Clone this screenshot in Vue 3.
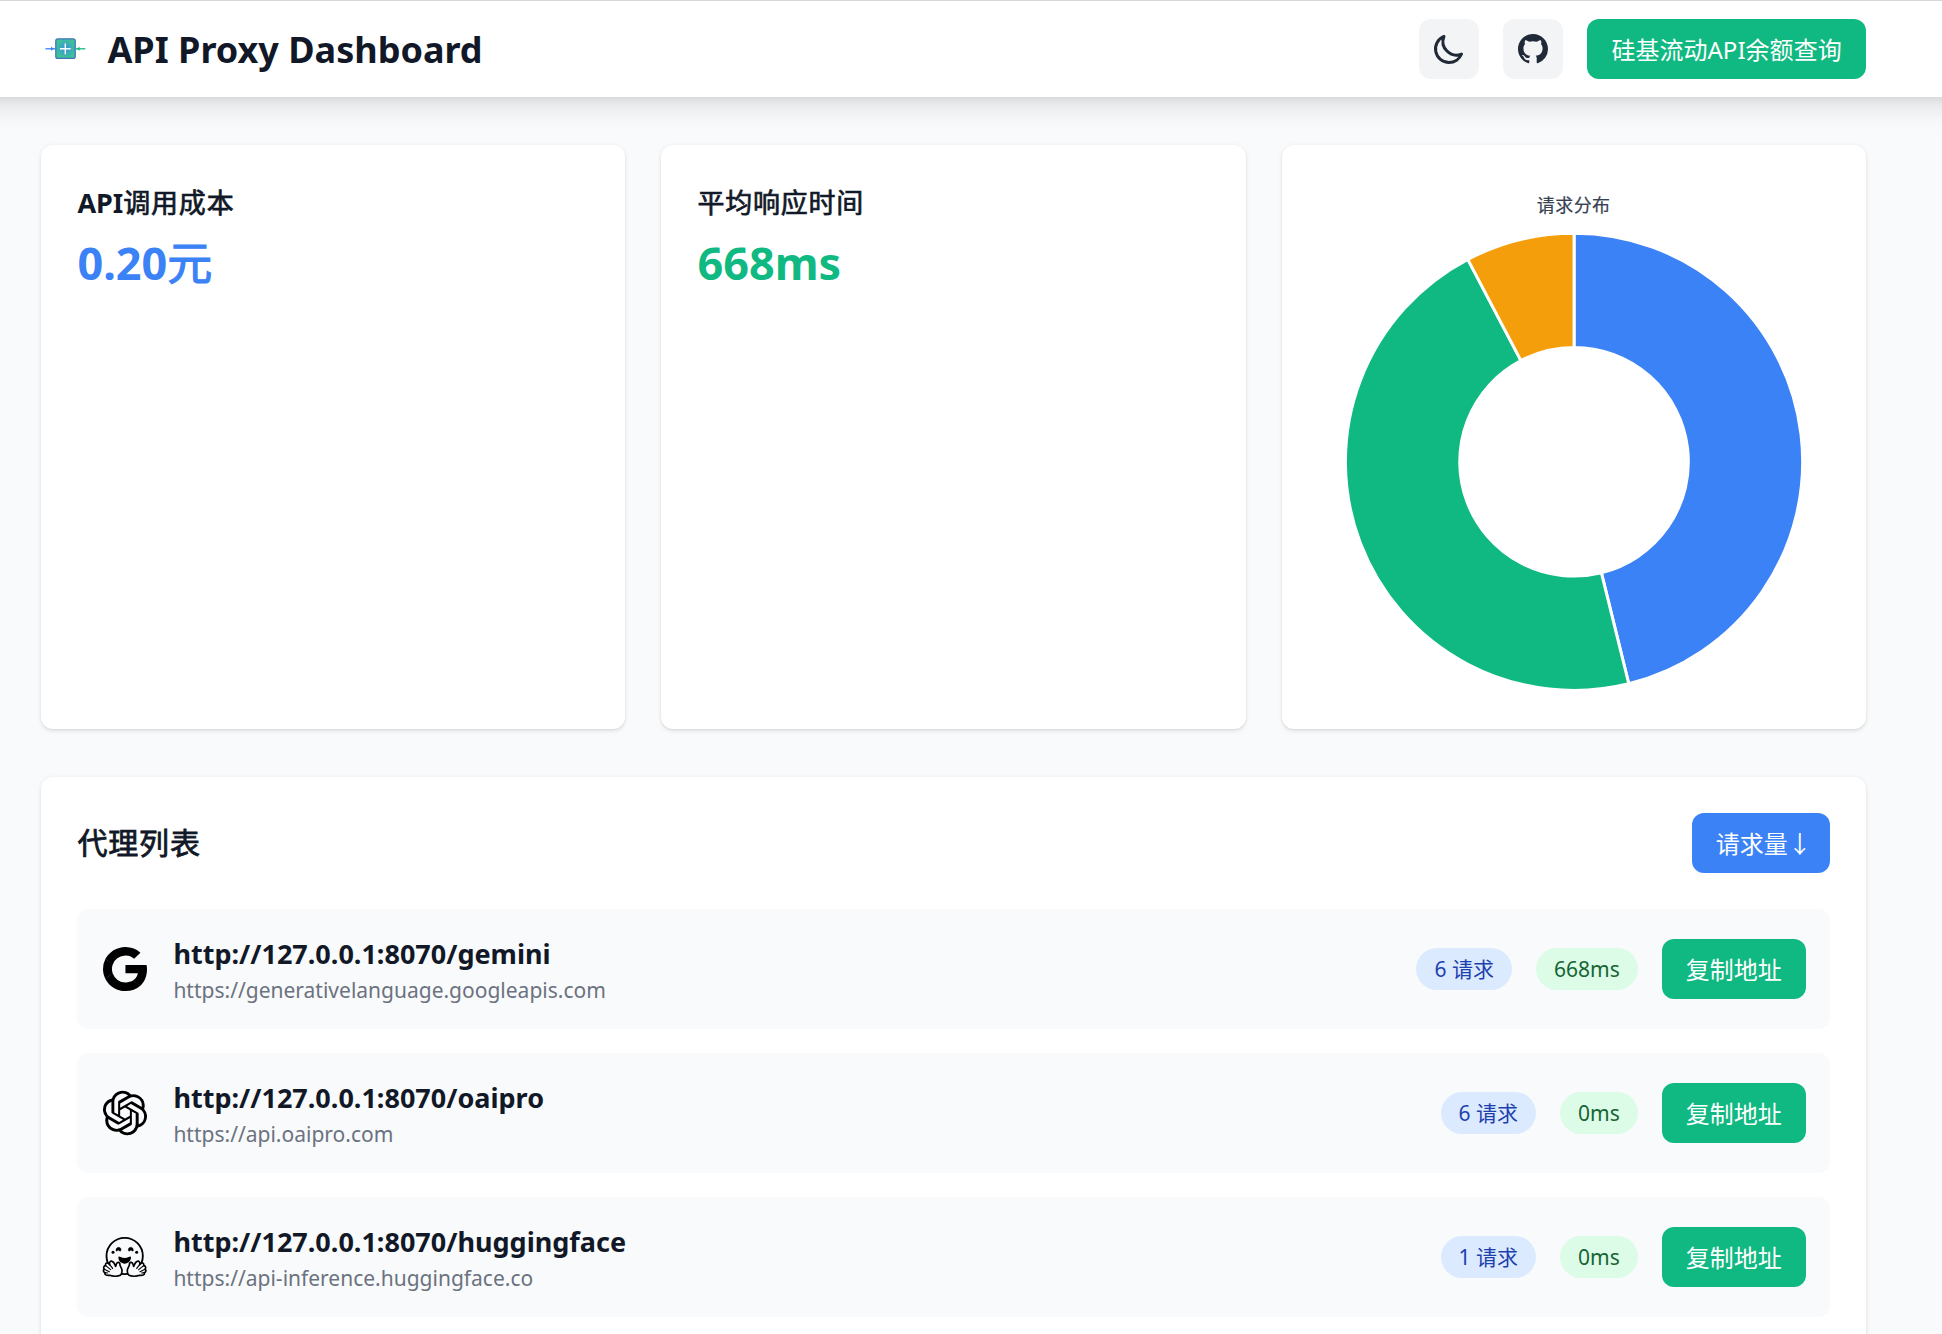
<script setup>
const proxies = [
  { icon: 'google', url: 'http://127.0.0.1:8070/gemini', target: 'https://generativelanguage.googleapis.com', count: 6, time: '668ms' },
  { icon: 'openai', url: 'http://127.0.0.1:8070/oaipro', target: 'https://api.oaipro.com', count: 6, time: '0ms' },
  { icon: 'hugging', url: 'http://127.0.0.1:8070/huggingface', target: 'https://api-inference.huggingface.co', count: 1, time: '0ms' },
]

const OUTER = 228.6
const INNER = 114.3
const colors = ['#3b82f6', '#10b981', '#f59e0b']
const total = proxies.reduce((sum, p) => sum + p.count, 0)

function point(radius, fraction) {
  const angle = fraction * 2 * Math.PI
  return `${(radius * Math.sin(angle)).toFixed(2)} ${(-radius * Math.cos(angle)).toFixed(2)}`
}

let start = 0
const slices = proxies.map((p, i) => {
  const end = start + p.count / total
  const large = end - start > 0.5 ? 1 : 0
  const d = `M${point(OUTER, start)}A${OUTER} ${OUTER} 0 ${large} 1 ${point(OUTER, end)}L${point(INNER, end)}A${INNER} ${INNER} 0 ${large} 0 ${point(INNER, start)}Z`
  start = end
  return { d, color: colors[i] }
})
</script>

<template>
  <div class="page">
    <header class="header">
      <div class="brand">
        <svg class="logo" viewBox="0 0.5 48 48">
          <defs>
            <radialGradient id="logoFill">
              <stop offset="0" stop-color="#3b8fe0" />
              <stop offset="1" stop-color="#3cc495" />
            </radialGradient>
          </defs>
          <rect x="14.8" y="14.3" width="19.4" height="19.6" rx="2" fill="url(#logoFill)" stroke="#4673bd" stroke-width="1.3" />
          <path d="M24.3 19v10.8M18.9 24.3h10.8" stroke="#fff" stroke-width="1.4" />
          <path d="M4.4 24.3h9.8" stroke="#3b82f6" stroke-width="1.3" />
          <path d="M10 22.3l3 2-3 2z" fill="#3b82f6" />
          <path d="M34.8 24.3h9.5" stroke="#10b981" stroke-width="1.3" />
          <path d="M38.600 22.3l-3 2 3 2z" fill="#10b981" />
        </svg>
        <h1>API Proxy Dashboard</h1>
      </div>
      <div class="actions">
        <button class="icon-button">
          <svg viewBox="0 0 24 24" fill="none" stroke="currentColor" stroke-width="2" stroke-linecap="round" stroke-linejoin="round">
            <path d="M20.354 15.354A9 9 0 018.646 3.646 9.003 9.003 0 0012 21a9.003 9.003 0 008.354-5.646z" />
          </svg>
        </button>
        <button class="icon-button">
          <svg viewBox="0 0 24 24" fill="currentColor">
            <path d="M12 2C6.477 2 2 6.484 2 12.017c0 4.425 2.865 8.18 6.839 9.504.5.092.682-.217.682-.483 0-.237-.008-.868-.013-1.703-2.782.605-3.369-1.343-3.369-1.343-.454-1.158-1.11-1.466-1.11-1.466-.908-.62.069-.608.069-.608 1.003.07 1.531 1.032 1.531 1.032.892 1.53 2.341 1.088 2.91.832.092-.647.35-1.088.636-1.338-2.22-.253-4.555-1.113-4.555-4.951 0-1.093.39-1.988 1.029-2.688-.103-.253-.446-1.272.098-2.65 0 0 .84-.27 2.75 1.026A9.564 9.564 0 0112 6.844c.85.004 1.705.115 2.504.337 1.909-1.296 2.747-1.027 2.747-1.027.546 1.379.202 2.398.1 2.651.64.7 1.028 1.595 1.028 2.688 0 3.848-2.339 4.695-4.566 4.943.359.309.678.92.678 1.855 0 1.338-.012 2.419-.012 2.747 0 .268.18.58.688.482A10.019 10.019 0 0022 12.017C22 6.484 17.522 2 12 2z" />
          </svg>
        </button>
        <button class="button green balance">硅基流动API余额查询</button>
      </div>
    </header>

    <main class="main">
      <section class="stats">
        <div class="card">
          <h3>API<span class="cjk">调用成本</span></h3>
          <p class="value blue-text">0.20<span class="cjk">元</span></p>
        </div>
        <div class="card">
          <h3><span class="cjk">平均响应时间</span></h3>
          <p class="value green-text">668ms</p>
        </div>
        <div class="card">
          <div class="chart-title">请求分布</div>
          <svg class="chart" viewBox="-256 -229.8 512 459.6">
            <path v-for="s in slices" :key="s.color" :d="s.d" :fill="s.color" stroke="#fff" stroke-width="3" stroke-linejoin="bevel" />
          </svg>
        </div>
      </section>

      <section class="card list">
        <div class="list-head">
          <h2><span class="cjk">代理列表</span></h2>
          <button class="button blue">请求量<span class="arrow">↓</span></button>
        </div>
        <div class="rows">
          <div v-for="p in proxies" :key="p.url" class="row">
            <svg v-if="p.icon === 'google'" class="provider" viewBox="0 0 24 24">
              <path d="M23 12.245c0-.905-.075-1.565-.236-2.25h-10.54v4.083h6.186c-.124 1.014-.797 2.542-2.294 3.569l-.021.136 3.332 2.53.23.022C21.779 18.417 23 15.593 23 12.245z" />
              <path d="M12.225 23c3.03 0 5.574-.978 7.433-2.665l-3.542-2.688c-.948.648-2.22 1.1-3.891 1.1a6.745 6.745 0 01-6.386-4.572l-.132.011-3.465 2.628-.045.124C4.043 20.531 7.835 23 12.225 23z" />
              <path d="M5.84 14.175A6.65 6.65 0 015.463 12c0-.758.138-1.491.361-2.175l-.006-.147-3.508-2.67-.115.054A10.831 10.831 0 001 12c0 1.772.436 3.447 1.197 4.938l3.642-2.763z" />
              <path d="M12.225 5.253c2.108 0 3.529.892 4.34 1.638l3.167-3.031C17.787 2.088 15.255 1 12.225 1 7.834 1 4.043 3.469 2.197 7.062l3.63 2.763a6.77 6.77 0 016.398-4.572z" />
            </svg>
            <svg v-else-if="p.icon === 'openai'" class="provider" viewBox="-0.9 -0.9 25.8 25.8">
              <path d="M22.2819 9.8211a5.9847 5.9847 0 0 0-.5157-4.9108 6.0462 6.0462 0 0 0-6.5098-2.9A6.0651 6.0651 0 0 0 4.9807 4.1818a5.9847 5.9847 0 0 0-3.9977 2.9 6.0462 6.0462 0 0 0 .7427 7.0966 5.98 5.98 0 0 0 .511 4.9107 6.051 6.051 0 0 0 6.5146 2.9001A5.9847 5.9847 0 0 0 13.2599 24a6.0557 6.0557 0 0 0 5.7718-4.2058 5.9894 5.9894 0 0 0 3.9977-2.9001 6.0557 6.0557 0 0 0-.7475-7.0729zm-9.022 12.6081a4.4755 4.4755 0 0 1-2.8764-1.0408l.1419-.0804 4.7783-2.7582a.7948.7948 0 0 0 .3927-.6813v-6.7369l2.02 1.1686a.071.071 0 0 1 .038.052v5.5826a4.504 4.504 0 0 1-4.4945 4.4944zm-9.6607-4.1254a4.4708 4.4708 0 0 1-.5346-3.0137l.142.0852 4.783 2.7582a.7712.7712 0 0 0 .7806 0l5.8428-3.3685v2.3324a.0804.0804 0 0 1-.0332.0615L9.74 19.9502a4.4992 4.4992 0 0 1-6.1408-1.6464zM2.3408 7.8956a4.485 4.485 0 0 1 2.3655-1.9728V11.6a.7664.7664 0 0 0 .3879.6765l5.8144 3.3543-2.0201 1.1685a.0757.0757 0 0 1-.071 0l-4.8303-2.7865A4.504 4.504 0 0 1 2.3408 7.872zm16.5963 3.8558L13.1038 8.364 15.1192 7.2a.0757.0757 0 0 1 .071 0l4.8303 2.7913a4.4944 4.4944 0 0 1-.6765 8.1042v-5.6772a.79.79 0 0 0-.407-.667zm2.0107-3.0231l-.142-.0852-4.7735-2.7818a.7759.7759 0 0 0-.7854 0L9.409 9.2297V6.8974a.0662.0662 0 0 1 .0284-.0615l4.8303-2.7866a4.4992 4.4992 0 0 1 6.6802 4.66zM8.3065 12.863l-2.02-1.1638a.0804.0804 0 0 1-.038-.0567V6.0742a4.4992 4.4992 0 0 1 7.3757-3.4537l-.142.0805L8.704 5.459a.7948.7948 0 0 0-.3927.6813zm1.0976-2.3654l2.602-1.4998 2.6069 1.4998v2.9994l-2.5974 1.4997-2.6067-1.4997Z" />
            </svg>
            <svg v-else class="provider" viewBox="34 53 144 144">
              <circle cx="105" cy="122" r="54.5" fill="none" stroke="#000" stroke-width="5.5" />
              <path d="M79 106c-1-7 4-11 9-10 6 1 8 7 5 11-3 2-4-2-7-2s-5 5-7 1zM131 106c1-7-4-11-9-10-6 1-8 7-5 11 3 2 4-2 7-2s5 5 7 1z" stroke="#000" stroke-width="1" />
              <circle cx="70" cy="111" r="4.5" />
              <circle cx="141" cy="111" r="4.5" />
              <path d="M86 126c0-4 4-3 7-1 7 4 17 4 24 0 3-2 7-3 7 1 0 11-8 19-19 19s-19-8-19-19z" />
              <g id="hand" fill="#f9fafb" stroke="#000" stroke-width="5" stroke-linejoin="round" stroke-linecap="round">
                <path d="M92 180C84 184 68 183 60 180C50 181 44 178 46 172C40 170 40 163 44 162C40 157 43 150 48 151C46 144 52 140 57 145L60 148C58 141 62 136 67 138C72 139 76 148 78 153C80 149 79 142 85 141C90 140 91 146 91 150C93 156 98 160 97 168C97 175 95 178 92 180Z" />
                <path d="M60 148L69 159M48 151L63 163M44 162L59 169M46 172L54 173" stroke-width="3.5" />
              </g>
              <use href="#hand" transform="translate(210 0) scale(-1 1)" />
            </svg>
            <div class="info">
              <div class="url">{{ p.url }}</div>
              <div class="target">{{ p.target }}</div>
            </div>
            <span class="pill count">{{ p.count }} 请求</span>
            <span class="pill time">{{ p.time }}</span>
            <button class="button green">复制地址</button>
          </div>
        </div>
      </section>
    </main>
  </div>
</template>

<style>
body {
  margin: 0;
  background: #f9fafb;
}
</style>

<style scoped>
* {
  box-sizing: border-box;
}
.page {
  height: 1334px;
  overflow: hidden;
  background: #f9fafb;
  color: #111827;
  font: 24px/36px "Noto Sans", "Noto Sans CJK SC", sans-serif;
}
h1, h2, h3, p {
  margin: 0;
}
svg {
  display: block;
}
/* The bar runs past both window edges so its shadow stays even. */
.header {
  position: relative;
  display: flex;
  align-items: center;
  justify-content: space-between;
  height: 97px;
  margin: 0 -40px;
  padding: 0 116.3px 0 81.4px;
  border-top: 1px solid #d8d8d8;
  background: #fff;
  box-shadow: 0 15px 22.5px -4.5px rgba(0, 0, 0, 0.1), 0 6px 9px -6px rgba(0, 0, 0, 0.1);
}
.brand {
  display: flex;
  align-items: center;
  gap: 18px;
}
.logo {
  width: 48px;
  height: 48px;
}
h1 {
  padding-top: 2px;
  font-size: 36px;
  line-height: 48px;
  font-weight: 700;
}
.actions {
  display: flex;
  gap: 24px;
}
.icon-button {
  width: 60px;
  height: 60px;
  padding: 12px;
  border: 0;
  border-radius: 12px;
  background: #f3f4f6;
  color: #1f2937;
}
.button {
  height: 60px;
  padding: 13px 24px 11px;
  border: 0;
  border-radius: 12px;
  color: #fff;
  font: inherit;
  white-space: nowrap;
}
.balance {
  letter-spacing: 0.03px;
}
.green {
  background: #10b981;
}
.blue {
  background: #3b82f6;
}
.main {
  padding: 48px 76.3px 48px 41.4px;
}
.stats {
  display: grid;
  grid-template-columns: repeat(3, 1fr);
  gap: 36px;
  height: 583.5px;
}
.card {
  padding: 36px;
  border-radius: 12px;
  background: #fff;
  box-shadow: 0 1.5px 4.5px rgba(0, 0, 0, 0.1), 0 1.5px 3px -1.5px rgba(0, 0, 0, 0.1);
}
h3 {
  margin-bottom: 11.5px;
  padding-top: 1px;
  font-size: 27px;
  line-height: 42px;
  font-weight: 700;
}
.cjk {
  font-weight: 400;
  letter-spacing: 0.028em;
  -webkit-text-stroke: 0.026em currentColor;
}
.value {
  font-size: 45px;
  line-height: 54px;
  font-weight: 700;
}
.blue-text {
  color: #3b82f6;
}
.green-text {
  color: #10b981;
}
.chart-title {
  height: 51.1px;
  color: #374151;
  font-size: 18px;
  line-height: 49px;
  font-weight: 400;
  letter-spacing: 0.4px;
  -webkit-text-stroke: 0.2px currentColor;
  text-align: center;
}
.chart {
  width: 100%;
  height: 459.6px;
}
.list {
  margin-top: 48px;
}
.list-head {
  display: flex;
  align-items: center;
  justify-content: space-between;
  margin-bottom: 36px;
}
h2 {
  font-size: 30px;
  line-height: 42px;
  font-weight: 700;
}
.arrow {
  margin-right: -6px;
}
.rows {
  display: flex;
  flex-direction: column;
  gap: 24px;
}
.row {
  display: flex;
  align-items: center;
  gap: 24px;
  height: 120px;
  padding: 24px;
  border-radius: 12px;
  background: #f9fafb;
}
.provider {
  flex: none;
  width: 48px;
  height: 48px;
}
.info {
  flex: 1;
}
.url {
  font-size: 27px;
  line-height: 42px;
  font-weight: 700;
}
.target {
  color: #6b7280;
  font-size: 21px;
  line-height: 30px;
}
.pill {
  padding: 6px 18px;
  border-radius: 21px;
  font-size: 21px;
  line-height: 30px;
  white-space: nowrap;
}
.count {
  background: #dbeafe;
  color: #1e40af;
}
.time {
  background: #dcfce7;
  color: #166534;
}
</style>
